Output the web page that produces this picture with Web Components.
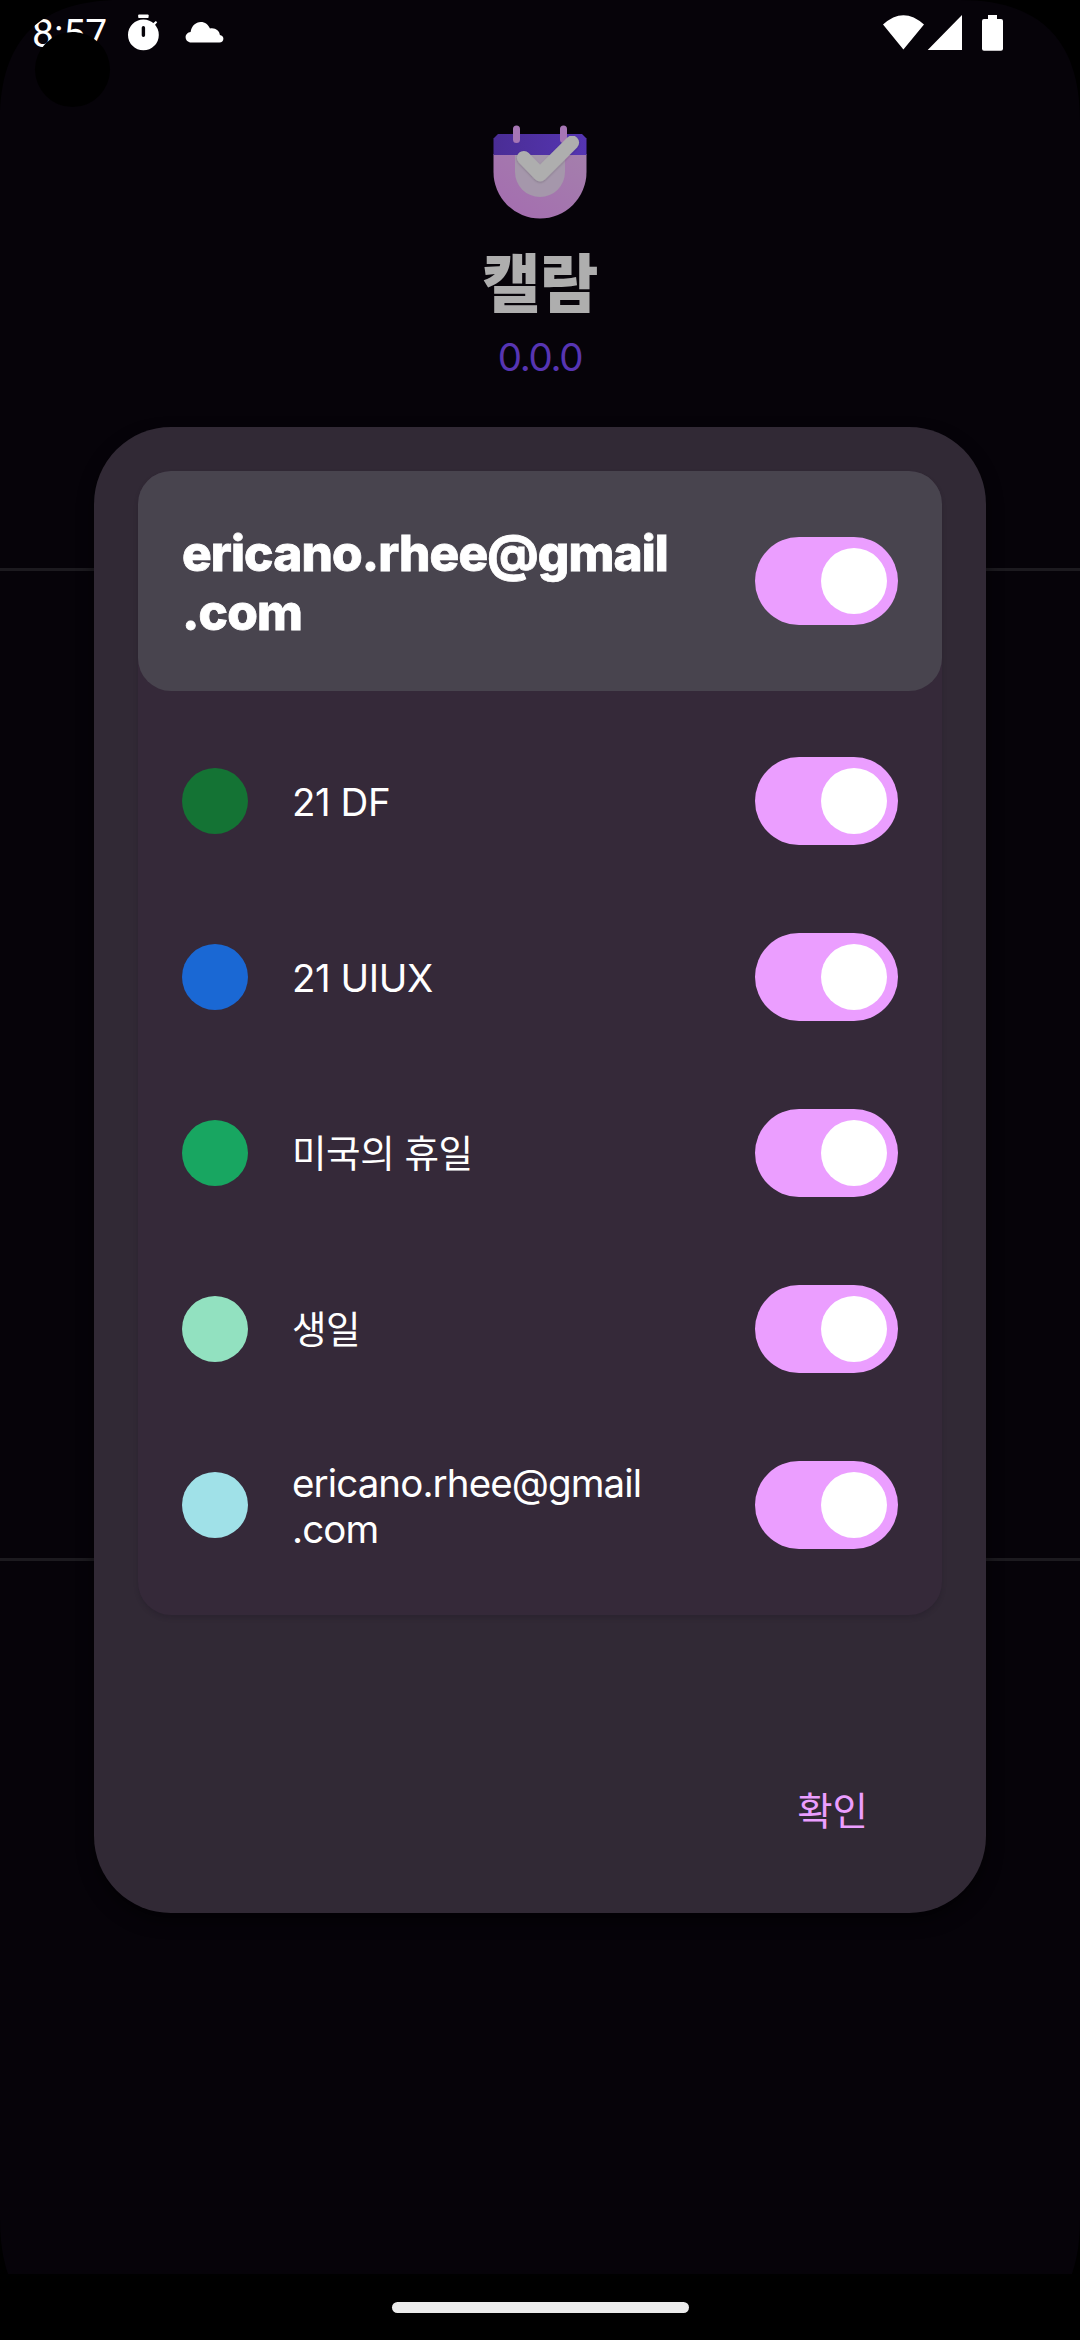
<!DOCTYPE html>
<html lang="ko">
<head>
<meta charset="utf-8">
<title>캘람</title>
<style>
html,body{margin:0;padding:0;background:#000}
body{width:1080px;height:2340px;overflow:hidden;font-family:Inter,"Noto Sans CJK KR",sans-serif;font-size:38.5px;color:#fff}
calendar-row{letter-spacing:-.45px}
calendar-row.hangul{font-size:37.5px;letter-spacing:-.4px}
calendar-row.mail{letter-spacing:-.9px}
</style>
</head>
<body>
<phone-screen>
  <status-bar slot="status"></status-bar>
  <app-about slot="page" name="캘람" version="0.0.0"></app-about>
  <calendar-dialog slot="dialog" action="확인">
    <account-card account="ericano.rhee@gmail&#10;.com">
      <calendar-row color="#147334">21 DF</calendar-row>
      <calendar-row color="#1a68d4">21 UIUX</calendar-row>
      <calendar-row class="hangul" color="#18a661">미국의 휴일</calendar-row>
      <calendar-row class="hangul" color="#92e1c0">생일</calendar-row>
      <calendar-row class="mail" color="#a0e1e8">ericano.rhee@gmail<br>.com</calendar-row>
    </account-card>
  </calendar-dialog>
  <gesture-bar slot="nav"></gesture-bar>
</phone-screen>
<script>
const define = (name, html) => customElements.define(name, class extends HTMLElement {
  constructor() {
    super();
    const a = k => (this.getAttribute(k) || '').replace('\n', '<br>');
    this.attachShadow({mode: 'open'}).innerHTML = html(a);
  }
});

define('phone-screen', () => `
<style>
:host{display:grid;grid-template:2274px 66px/1080px;width:1080px;height:2340px;background:#060309;overflow:hidden}
.layer{grid-area:1/1;display:flex;flex-direction:column;align-items:center;min-height:0}
.dialog{padding-top:427px}
.nav{grid-area:2/1;display:flex}
svg{grid-area:1/1;width:1080px;height:2340px;z-index:1}
.top{grid-area:1/1;z-index:1}
</style>
<div class="layer"><slot name="page"></slot></div>
<div class="layer dialog"><slot name="dialog"></slot></div>
<div class="top"><slot name="status"></slot></div>
<svg viewBox="0 0 1080 2340"><path d="M0 0H120C40 0 0 40 0 120ZM1080 0H960C1040 0 1080 40 1080 120ZM0 2220C0 2300 40 2340 120 2340H0ZM1080 2220C1080 2300 1040 2340 960 2340H1080Z"/><circle cx="72.5" cy="69.5" r="37.5"/></svg>
<div class="nav"><slot name="nav"></slot></div>`);

define('status-bar', () => `
<style>
:host{display:flex;justify-content:space-between;height:66px;width:1080px}
.time{font:400 39px/68px Roboto,sans-serif;margin-left:32px;width:80px;letter-spacing:0}
.left{display:flex}
svg{display:block;height:66px;fill:#fff}
</style>
<div class="left"><span class="time">8:57</span>
<svg width="128" viewBox="112 0 128 66"><path fill-rule="evenodd" d="M143.4 19.5a15.4 15.4 0 1 1 0 30.8a15.4 15.4 0 1 1 0-30.8ZM143.4 26a1.7 1.7 0 0 0-1.7 1.7v7.6a1.7 1.7 0 0 0 3.4 0v-7.6a1.7 1.7 0 0 0-1.7-1.7Z"/><rect x="138.2" y="14.4" width="10.4" height="3.6" rx=".8"/><path d="M152.8 23.4L155.8 20.9L157.2 22.3L154.5 25.4Z"/><path d="M191.2 42.5C188 42.5 185.6 40 185.6 37.2C185.6 34.2 187.8 32.2 190.6 31.9C191.4 26.2 195.6 21.9 200.8 21.9C205 21.9 208.4 24.6 210 28.4C215.3 27.4 219.5 30.6 219.9 35C222 35.2 223.4 36.8 223.4 38.7C223.4 40.8 221.8 42.5 219.5 42.5Z"/></svg></div>
<svg width="220" viewBox="860 0 220 66"><path d="M883 24.5Q903.4 5.8 924 24.5L903.4 49.5ZM927.7 50L962 15V50ZM988 15H997V19H1001Q1003 19 1003 21V48.7Q1003 50.7 1001 50.7H984Q982 50.7 982 48.7V21Q982 19 984 19H988Z"/></svg>`);

define('app-about', a => `
<style>
:host{display:flex;flex-direction:column;align-items:center;width:1080px}
svg{display:block;width:96px;height:96px;margin-top:124px}
h1{margin:17px 0 0;font:900 63.5px/84px "Noto Sans CJK KR",sans-serif;color:#aeaeae;letter-spacing:-.5px}
p{margin:12px 0 0;font-weight:400;line-height:48px;color:#5735b3;letter-spacing:-1.3px}
section{width:1080px;height:987px;border:solid #1c1a1f;border-width:3px 0;margin-top:187px}
</style>
<svg viewBox="492 124 96 96">
<defs><linearGradient id="p" x1="0" x2="1"><stop stop-color="#4a2d95"/><stop offset="1" stop-color="#5535b2"/></linearGradient><linearGradient id="m" x1="0" y1="1" x2="1" y2="0"><stop stop-color="#a46cb0"/><stop offset="1" stop-color="#a47fac"/></linearGradient>
<filter id="s" x="-20%" y="-20%" width="140%" height="150%"><feDropShadow dx="0" dy="1" stdDeviation="1.2" flood-opacity=".2"/></filter></defs>
<path fill="url(#m)" d="M493.5 154H586.5V172A46.5 46.5 0 0 1 493.5 172Z"/>
<path fill="#a597ab" d="M515 155H565V172A25 25 0 0 1 515 172Z"/>
<path fill="url(#p)" d="M493.5 155V138.500L498 134H582L586.500 138.500V155Z"/>
<path fill="none" stroke="#a676b5" stroke-width="7" stroke-linecap="round" d="M516.500 129V139.500M563.500 129V139.500"/>
<path filter="url(#s)" fill="none" stroke="#aeaeae" stroke-width="13.800" stroke-linecap="round" stroke-linejoin="round" d="M523.800 157.800L540 174.500L572.200 142.500"/>
</svg>
<h1>${a('name')}</h1><p>${a('version')}</p><section></section>`);

define('calendar-dialog', a => `
<style>
:host{box-sizing:border-box;display:flex;flex-direction:column;justify-content:space-between;width:892px;height:1486px;padding:44px;border-radius:77px;background:#312935;box-shadow:0 8px 16px #0008}
button{align-self:flex-end;height:110px;margin:0 41px 3px 0;padding:0 33px;background:none;border:0;font:400 38.5px/110px Inter,"Noto Sans CJK KR",sans-serif;color:#eb9eff}
</style>
<slot></slot><button>${a('action')}</button>`);

define('account-card', a => `
<style>
:host{display:block;border-radius:33px;background:#352939;box-shadow:0 3px 4px #201a2855}
header{box-sizing:border-box;display:flex;align-items:center;justify-content:space-between;height:220px;padding:4px 44px 0;border-radius:33px;background:#48444e;font-weight:850;font-size:49.5px;line-height:59px;letter-spacing:-.88px;-webkit-text-stroke:.8px #fff}
toggle-switch{margin-top:-4px}
.rows{padding:22px 0}
</style>
<header><span>${a('account')}</span><toggle-switch></toggle-switch></header><div class="rows"><slot></slot></div>`);

define('calendar-row', a => `
<style>
:host{box-sizing:border-box;display:flex;align-items:center;height:176px;padding:0 44px;gap:44px;line-height:46px}
i{width:66px;height:66px;border-radius:50%;background:${a('color')}}
span{flex:1;padding-top:2px}
</style>
<i></i><span><slot></slot></span><toggle-switch></toggle-switch>`);

define('toggle-switch', () => `
<style>
:host{box-sizing:border-box;display:flex;justify-content:flex-end;width:143px;height:88px;padding:11px;border-radius:44px;background:#eb9eff}
i{width:66px;height:66px;border-radius:50%;background:#fff}
</style><i></i>`);

define('gesture-bar', () => `
<style>
:host{display:flex;width:1080px;height:66px;align-items:center;justify-content:center;background:#000}
i{width:297px;height:11px;border-radius:6px;background:#ececec}
</style><i></i>`);
</script>
</body>
</html>
